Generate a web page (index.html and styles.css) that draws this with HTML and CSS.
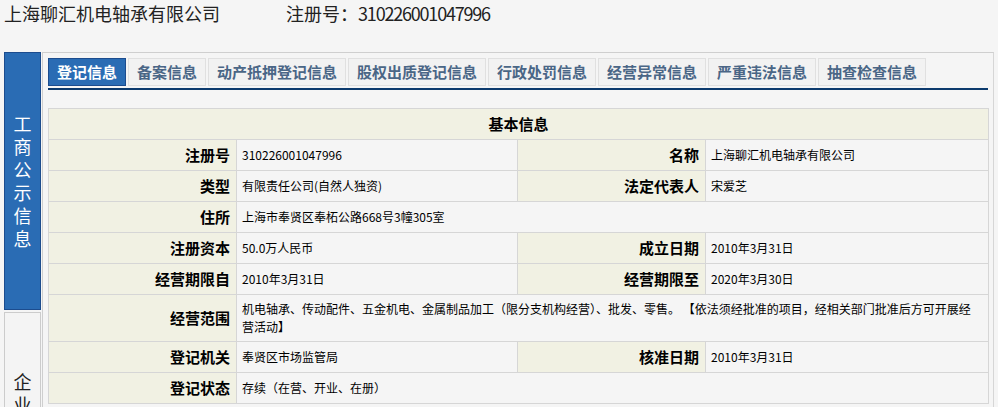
FILE: index.html
```html
<!DOCTYPE html>
<html lang="zh-CN">
 <head>
   <title>企业信用信息公示</title>
   <meta charset="utf-8"/>
   <link rel="stylesheet" href="styles.css">
 </head>

 <body>
   <div id="wrap">
      <header class="top">
         <span class="co_name">上海聊汇机电轴承有限公司</span>
         <span class="reg_no">注册号：<span class="num">310226001047996</span></span>
      </header>

      <div class="main">
         <ul class="side">
            <li class="side_item on">工商公示信息</li>
            <li class="side_item">企业公示信息</li>
         </ul>

         <section class="panel">
            <ul class="tabs">
               <li class="on">登记信息</li>
               <li>备案信息</li>
               <li>动产抵押登记信息</li>
               <li>股权出质登记信息</li>
               <li>行政处罚信息</li>
               <li>经营异常信息</li>
               <li>严重违法信息</li>
               <li>抽查检查信息</li>
            </ul>

            <table class="info">
               <colgroup>
                  <col class="c_lbl"><col class="c_val"><col class="c_lbl"><col class="c_val2">
               </colgroup>
               <tr><th class="cap" colspan="4">基本信息</th></tr>
               <tr>
                  <th>注册号</th><td>310226001047996</td>
                  <th>名称</th><td>上海聊汇机电轴承有限公司</td>
               </tr>
               <tr>
                  <th>类型</th><td>有限责任公司(自然人独资)</td>
                  <th>法定代表人</th><td>宋爱芝</td>
               </tr>
               <tr>
                  <th>住所</th><td colspan="3">上海市奉贤区奉柘公路668号3幢305室</td>
               </tr>
               <tr>
                  <th>注册资本</th><td>50.0万人民币</td>
                  <th>成立日期</th><td>2010年3月31日</td>
               </tr>
               <tr>
                  <th>经营期限自</th><td>2010年3月31日</td>
                  <th>经营期限至</th><td>2020年3月30日</td>
               </tr>
               <tr>
                  <th>经营范围</th>
                  <td class="multi" colspan="3">机电轴承、传动配件、五金机电、金属制品加工（限分支机构经营）、批发、零售。 【依法须经批准的项目，经相关部门批准后方可开展经营活动】</td>
               </tr>
               <tr>
                  <th>登记机关</th><td>奉贤区市场监管局</td>
                  <th>核准日期</th><td>2010年3月31日</td>
               </tr>
               <tr>
                  <th>登记状态</th><td colspan="3">存续（在营、开业、在册）</td>
               </tr>
            </table>
         </section>
      </div>
   </div>
 </body>
</html>
```

FILE: styles.css
```css
/*####### reset #######*/
*{margin:0; padding:0; box-sizing:border-box;}
ul{list-style:none;}
html,body{overflow:hidden;}

body{background-color:#f5f5f5; color:#000; font-family:"Noto Sans CJK SC", sans-serif; padding-left:4px;}
#wrap{width:990px;}

/*####### top #######*/
.top{height:26px; line-height:26px; font-size:18px; color:#222; margin-bottom:26px; white-space:nowrap;}
.top .reg_no{margin-left:62px;}
.top .num{letter-spacing:-1.2px;}

/*####### main #######*/
.main{display:flex; gap:1px; align-items:flex-start;}

/* side menu : one char per line */
.side{width:37px;}
.side_item{height:258px; margin-bottom:2px; border:1px solid #ccc; background-color:#f4f4f4; color:#222;
   font-size:18px; line-height:23px; display:flex; align-items:center; justify-content:center; padding:0 9px; text-align:center;}
.side_item.on{background-color:#2a6cb4; border-color:#1c4c8e; color:#fff;}
.side_item + .side_item{align-items:flex-start; padding-top:57px;}

/*####### panel #######*/
.panel{width:952px; min-height:400px; border:1px solid #cfcfcf; border-right-color:#d6d6d6; padding:5px 5px 0 5px;}

.tabs{display:flex; gap:2px; padding-bottom:2px; border-bottom:2px solid #0c3a6d;}
.tabs li{height:28px; line-height:26px; padding:0 8px; border:1px solid #e0e0e0; background-color:#f2f2f2;
   font-size:15px; font-weight:bold; color:#4a6686; white-space:nowrap;}
.tabs li.on{background-color:#2a6cb4; border-color:#1c4c8e; color:#fff;}

/*####### info table #######*/
.info{width:940px; margin-top:18px; border-collapse:collapse; border:1px solid #d6d6d6; table-layout:fixed;}
.info .c_lbl{width:188px;}
.info .c_val{width:281px;}
.info .c_val2{width:283px;}

.info th, .info td{border:1px solid #d6d6d6; line-height:20px; padding:5px 6px;}
.info th{background-color:#f1f1e3; font-size:15px; font-weight:bold; text-align:right; white-space:nowrap;}
.info th.cap{text-align:center;}
.info td{background-color:#f5f5f5; font-size:12px; padding:5px 5px; text-align:left;}
.info td.multi{line-height:18px; padding:5px 14px 5px 5px;}
```
